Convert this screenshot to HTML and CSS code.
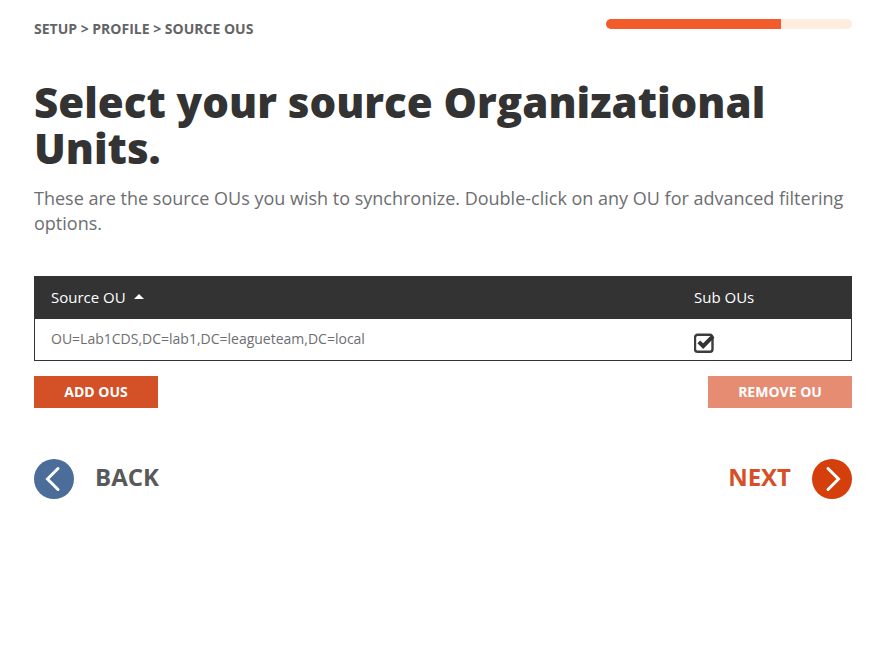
FILE: index.html
```html
<!DOCTYPE html>
<html lang="en">
<head>
  <meta charset="UTF-8">
  <title>Source OUs</title>
  <link rel="stylesheet" href="styles.css">
</head>
<body>
  <div class="top">
    <div class="crumbs">SETUP &gt; PROFILE &gt; SOURCE OUS</div>
    <div class="progress"><div class="progress-fill"></div></div>
  </div>

  <h1>Select your source Organizational Units.</h1>
  <p class="intro">These are the source OUs you wish to synchronize. Double-click on any OU for advanced filtering options.</p>

  <div class="grid">
    <div class="grid-head">
      <div class="col-ou">Source OU <span class="sort"></span></div>
      <div class="col-sub">Sub OUs</div>
    </div>
    <div class="grid-row">
      <div class="col-ou">OU=Lab1CDS,DC=lab1,DC=leagueteam,DC=local</div>
      <div class="col-sub">
        <svg class="check" width="21" height="20" viewBox="0 0 21 20">
          <path d="M3.5 1.8h12.5a2.5 2.5 0 0 1 2.5 2.5v12a2.5 2.5 0 0 1-2.5 2.5H3.5A2.5 2.5 0 0 1 1 16.300V4.300a2.500 2.500 0 0 1 2.500-2.500z" fill="none" stroke="#3c3c3c" stroke-width="2.400"/>
          <path d="M4.800 8.800l4.400 4.400L19 3.200" fill="none" stroke="#333" stroke-width="4"/>
        </svg>
      </div>
    </div>
  </div>

  <div class="actions">
    <button class="btn">ADD OUS</button>
    <button class="btn btn-off">REMOVE OU</button>
  </div>

  <div class="nav">
    <a class="nav-link back">
      <span class="circle circle-back">
        <svg width="40" height="40" viewBox="0 0 40 40"><path d="M24 9.500L13.500 20 24 30.500" fill="none" stroke="#fff" stroke-width="3" stroke-linecap="round"/></svg>
      </span>
      <span class="nav-label">BACK</span>
    </a>
    <a class="nav-link next">
      <span class="nav-label">NEXT</span>
      <span class="circle circle-next">
        <svg width="40" height="40" viewBox="0 0 40 40"><path d="M16 9.500L26.500 20 16 30.500" fill="none" stroke="#fff" stroke-width="3" stroke-linecap="round"/></svg>
      </span>
    </a>
  </div>
</body>
</html>
```

FILE: styles.css
```css
body {
  margin: 0;
  padding: 19px 18px 0 34px;
  font-family: 'Open Sans', sans-serif;
  background: #fff;
  color: #333;
}
.top {
  display: flex;
  justify-content: space-between;
  align-items: flex-start;
}
.crumbs {
  font-size: 14px;
  font-weight: 700;
  line-height: 20px;
  color: #636466;
}
.progress {
  width: 246px;
  height: 10px;
  background: #feeddf;
  border-radius: 5px;
  overflow: hidden;
}
.progress-fill {
  width: 175px;
  height: 10px;
  background: #f25c2b;
}
h1 {
  margin: 40px 0 0;
  font-size: 42px;
  font-weight: 800;
  line-height: 46px;
  color: #333;
}
.intro {
  margin: 15px 0 0;
  font-size: 18px;
  line-height: 25px;
  color: #6d6e71;
}
.grid {
  margin-top: 40px;
  border: 1px solid #333;
}
.grid-head {
  display: flex;
  height: 42px;
  align-items: center;
  background: #333;
  color: #fff;
  font-size: 15px;
  padding-bottom: 2px;
  box-sizing: border-box;
}
.grid-row {
  display: flex;
  height: 41px;
  font-size: 14px;
  color: #6d6e71;
}
.col-ou {
  width: 643px;
  padding-left: 16px;
}
.grid-row .col-ou { padding-top: 10px; }
.grid-row .col-sub { padding-top: 14px; }
.col-sub { flex: 1; }
.check { display: block; }
.sort {
  display: inline-block;
  margin-left: 4px;
  vertical-align: 4px;
  border-left: 5px solid transparent;
  border-right: 5px solid transparent;
  border-bottom: 5px solid #fff;
}
.actions {
  display: flex;
  justify-content: space-between;
  margin-top: 15px;
}
.btn {
  height: 32px;
  width: 124px;
  padding: 0 0 2px;
  border: none;
  background: #d45026;
  color: #fff;
  font-family: inherit;
  font-size: 14px;
  font-weight: 700;
}
.btn-off {
  width: 144px;
  background: #e58c72;
}
.nav {
  display: flex;
  justify-content: space-between;
  margin-top: 51px;
}
.nav-link {
  display: flex;
  align-items: center;
  gap: 21px;
  font-size: 24px;
  font-weight: 700;
}
.nav-label { margin-bottom: 6px; }
.back { color: #58595b; }
.next { color: #d64f27; }
.circle {
  display: block;
  width: 40px;
  height: 40px;
  border-radius: 50%;
}
.circle svg { display: block; }
.circle-back { background: #4a6d99; }
.circle-next { background: #d43f0c; }
```
